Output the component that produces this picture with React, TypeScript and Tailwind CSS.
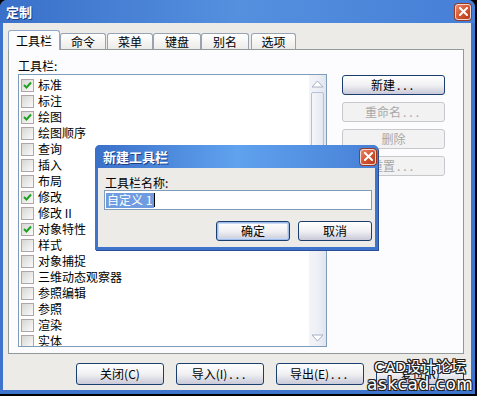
import React from "react";

const items: { label: string; checked?: boolean }[] = [
  { label: "标准", checked: true },
  { label: "标注" },
  { label: "绘图", checked: true },
  { label: "绘图顺序" },
  { label: "查询" },
  { label: "插入" },
  { label: "布局" },
  { label: "修改", checked: true },
  { label: "修改 II" },
  { label: "对象特性", checked: true },
  { label: "样式" },
  { label: "对象捕捉" },
  { label: "三维动态观察器" },
  { label: "参照编辑" },
  { label: "参照" },
  { label: "渲染" },
  { label: "实体" },
];

function CloseButton() {
  return (
    <div className="w-[16px] h-[16px] rounded-[3px] border border-[#f4d8d0] bg-gradient-to-br from-[#e9896d] via-[#d4552f] to-[#b63c1e] flex items-center justify-center shadow-[0_0_0_1px_#9a3a22]">
      <svg width="9" height="9" viewBox="0 0 9 9">
        <path d="M1 1 L8 8 M8 1 L1 8" stroke="white" strokeWidth="2" strokeLinecap="square" />
      </svg>
    </div>
  );
}

function Checkbox({ checked }: { checked?: boolean }) {
  return (
    <div className="w-[13px] h-[13px] border border-[#b0a4aa] bg-gradient-to-br from-[#d6d6d2] to-[#fbfbfb] flex items-center justify-center shrink-0">
      {checked && (
        <svg width="9" height="9" viewBox="0 0 9 9">
          <path d="M1 4 L3.5 6.5 L8 1.5" stroke="#21a121" strokeWidth="2" fill="none" />
        </svg>
      )}
    </div>
  );
}

// splits a trailing "..." so the dots get the wide spacing of the original dialog font
function Label({ text }: { text: string }) {
  if (!text.endsWith("...")) return <>{text}</>;
  return (
    <>
      {text.slice(0, -3)}
      <span className="tracking-[3px] ml-[2px]">...</span>
    </>
  );
}

function XpButton({
  label,
  className = "",
  disabled,
  isDefault,
}: {
  label: string;
  className?: string;
  disabled?: boolean;
  isDefault?: boolean;
}) {
  if (disabled) {
    return (
      <div
        className={`rounded-[3px] border border-[#c6c8cc] bg-[#f2f2f2] text-[#a8a8a8] flex items-center justify-center ${className}`}
      >
        <Label text={label} />
      </div>
    );
  }
  return (
    <div
      className={`rounded-[3px] border border-[#1a3f6e] bg-gradient-to-b from-white via-[#f1f1f4] to-[#c9c9d9] text-black flex items-center justify-center ${
        isDefault ? "shadow-[inset_0_0_0_1px_#9fbbe8,inset_0_0_0_2px_#c8d8f2]" : ""
      } ${className}`}
    >
      <Label text={label} />
    </div>
  );
}

function Tab({ label, active, className = "" }: { label: string; active?: boolean; className?: string }) {
  if (active) {
    return (
      <div
        className={`h-[20px] -mb-px relative z-10 rounded-t-[3px] border-x border-t border-[#91a7c8] bg-[#fcfcfe] flex items-center justify-center ${className}`}
      >
        {label}
      </div>
    );
  }
  return (
    <div
      className={`h-[16px] rounded-t-[3px] border-x border-t border-[#97a3b0] bg-gradient-to-b from-white to-[#ecebe8] flex items-center justify-center ${className}`}
    >
      {label}
    </div>
  );
}

export default function App() {
  return (
    <div className="w-[477px] h-[396px] bg-black relative overflow-hidden text-[12px] text-black font-['Noto_Sans_CJK_SC','Noto_Sans_CJK_JP',sans-serif] leading-none">
      <div className="w-[475px] h-[394px] flex flex-col rounded-t-[7px] bg-[#3f74cd]">
        {/* title bar */}
        <div className="h-[23px] shrink-0 flex items-center justify-between pl-[6px] pr-[4px] rounded-t-[7px] bg-gradient-to-r from-[#3a70c9] via-[#5590df] to-[#467fd6]">
          <span className="text-white font-bold text-[13px] [text-shadow:1px_1px_#1c3f86]">定制</span>
          <CloseButton />
        </div>

        {/* body */}
        <div className="flex-1 ml-[3px] mr-[4px] mb-[4px] bg-[#ecebe8] flex flex-col">
          <div className="flex items-end h-[19px] mt-[7px] pl-[5px]">
            <Tab label="工具栏" active className="w-[52px]" />
            <Tab label="命令" className="w-[46px]" />
            <Tab label="菜单" className="w-[46px] ml-[1px]" />
            <Tab label="键盘" className="w-[48px]" />
            <Tab label="别名" className="w-[48px]" />
            <Tab label="选项" className="w-[45px] ml-[2px]" />
          </div>

          <div className="ml-[5px] w-[456px] h-[305px] border border-[#919b9c] bg-[#fcfcfe] flex pt-[8px] pl-[9px]">
            <div className="flex flex-col">
              <div className="h-[16px] flex items-center">工具栏:</div>
              <div className="w-[309px] h-[273px] border border-[#7f9db9] bg-white flex overflow-hidden">
                <div className="flex-1 flex flex-col pt-[2px] pl-[2px]">
                  {items.map((it) => (
                    <div key={it.label} className="h-[16px] flex items-center gap-[4px] shrink-0">
                      <Checkbox checked={it.checked} />
                      <span className="whitespace-pre">{it.label}</span>
                    </div>
                  ))}
                </div>
                <div className="w-[17px] flex flex-col bg-gradient-to-r from-[#f3f4f8] via-[#eef0f6] to-[#e0e4ee]">
                  <div className="h-[17px] flex items-center justify-center">
                    <svg width="13" height="8" viewBox="0 0 13 8">
                      <path d="M1 7 L6.5 1 L12 7 Z" fill="white" stroke="#a6b0c2" />
                    </svg>
                  </div>
                  <div className="mx-[2px] h-[108px] rounded-[2px] border border-[#b4c0d4] bg-gradient-to-r from-[#f6f7fa] to-[#e3e8f0]" />
                  <div className="flex-1" />
                  <div className="h-[17px] flex items-center justify-center">
                    <svg width="13" height="8" viewBox="0 0 13 8">
                      <path d="M1 1 L6.5 7 L12 1 Z" fill="white" stroke="#a6b0c2" />
                    </svg>
                  </div>
                </div>
              </div>
            </div>
            <div className="ml-[15px] mt-[17px] flex flex-col gap-[7px]">
              <XpButton label="新建..." className="w-[103px] h-[20px]" />
              <XpButton label="重命名..." disabled className="w-[103px] h-[20px]" />
              <XpButton label="删除" disabled className="w-[103px] h-[20px]" />
              <XpButton label="重置..." disabled className="w-[103px] h-[20px]" />
            </div>
          </div>

          <div className="flex gap-[12px] pl-[73px] mt-[9px]">
            <XpButton label="关闭(C)" className="w-[88px] h-[22px]" />
            <XpButton label="导入(I)..." className="w-[88px] h-[22px]" />
            <XpButton label="导出(E)..." className="w-[88px] h-[22px]" />
            <XpButton label="复位(R)" className="w-[88px] h-[22px]" />
          </div>
        </div>
      </div>

      {/* sub dialog */}
      <div className="absolute left-[95px] top-[145px] w-[283px] h-[105px] rounded-t-[5px] bg-[#3f74cd] flex flex-col shadow-[1px_1px_0_#2a4f96]">
        <div className="h-[23px] shrink-0 flex items-center justify-between pl-[8px] pr-[2px] rounded-t-[5px] bg-gradient-to-r from-[#3a70c9] via-[#60a2ee] to-[#4780d6]">
          <span className="text-white font-bold text-[13px] [text-shadow:1px_1px_#1c3f86]">新建工具栏</span>
          <CloseButton />
        </div>
        <div className="flex-1 mx-[3px] mb-[3px] bg-[#ecebe8] flex flex-col pt-[7px] pl-[6px]">
          <div className="h-[15px] flex items-center pl-[1px]">工具栏名称:</div>
          <div className="w-[268px] h-[20px] border border-[#7f9db9] bg-white flex items-center pl-[1px]">
            <span className="bg-[#6f9be0] text-white h-[15px] flex items-center pl-[1px] pr-[2px] whitespace-pre">自定义 1</span>
            <span className="w-px h-[14px] bg-black" />
          </div>
          <div className="flex gap-[8px] mt-[11px] pl-[112px]">
            <XpButton label="确定" isDefault className="w-[74px] h-[20px]" />
            <XpButton label="取消" className="w-[74px] h-[20px]" />
          </div>
        </div>
      </div>

      {/* watermark */}
      <div className="absolute left-[367px] top-[358px] flex flex-col items-center text-white [text-shadow:1px_0_#222,-1px_0_#222,0_1px_#222,0_-1px_#222,1px_1px_#222,-1px_-1px_#222,1px_-1px_#222,-1px_1px_#222]">
        <span className="text-[15px] leading-[17px] font-['Liberation_Sans','Noto_Sans_CJK_SC',sans-serif]">CAD设计论坛</span>
        <span className="text-[17px] leading-[18px] tracking-[0.5px] font-['DejaVu_Sans',sans-serif]">askcad.com</span>
      </div>
    </div>
  );
}
